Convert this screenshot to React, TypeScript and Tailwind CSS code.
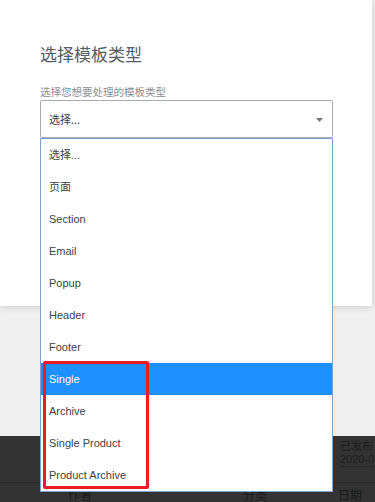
const options = ["选择...", "页面", "Section", "Email", "Popup", "Header", "Footer", "Single", "Archive", "Single Product", "Product Archive"];

const font = "font-['Liberation_Sans','Noto_Sans_CJK_SC',sans-serif]";

export default function App() {
  return (
    <div className={`relative h-[502px] w-[375px] overflow-hidden bg-[#f0f0f1] ${font}`}>
      {/* modal */}
      <div className="flex h-[306px] w-[375px]">
        <div className="relative z-10 h-[306px] w-[372px] bg-white px-10 pt-[44px] shadow-[0_2px_6px_rgba(0,0,0,0.12)]">
          <h2 className="text-[17px] leading-[20px] text-[#555d66] font-['Noto_Sans_CJK_SC',sans-serif]">选择模板类型</h2>
          <label className="mt-[21px] block text-[10.5px] leading-[14px] text-[#8a8e93] font-['Noto_Sans_CJK_SC',sans-serif]">
            选择您想要处理的模板类型
          </label>
          <div className="mt-[1px] flex h-[38px] w-[293px] items-center justify-between rounded-[2px] border border-[#a7abb0] pl-[8px] pr-[9px]">
            <span className="text-[11px] text-[#3c434a] font-['Noto_Sans_CJK_SC',sans-serif]">选择...</span>
            <svg width="7" height="4" viewBox="0 0 7 4" className="mt-[1px]">
              <path d="M0 0h7L3.5 4z" fill="#72777c" />
            </svg>
          </div>
        </div>
        <div className="w-[3px] bg-[#ebebec]" />
      </div>

      {/* page behind */}
      <div className="h-[130px]" />
      <div className="h-[46px] whitespace-nowrap bg-[#333333] pl-[340px] pt-[3px] text-[11px] leading-[13px] text-[#1e1e1e] font-['Noto_Sans_CJK_SC',sans-serif]">
        <div>已发布</div>
        <div className="inline-block border-b border-dotted border-[#1e1e1e] font-['Liberation_Sans',sans-serif]">2020-04-12</div>
      </div>
      <div className="h-px bg-[#2a2a2a]" />
      <div className="flex h-[20px] items-end bg-[#333333] text-[12px] leading-[16px] text-[#1a1a1a] font-['Noto_Sans_CJK_SC',sans-serif]">
        <span className="ml-[68px]">作者</span>
        <span className="ml-[151px]">分类</span>
        <span className="ml-[71px]">日期</span>
      </div>

      {/* open dropdown list */}
      <ul className="absolute left-[40px] top-[138px] z-20 w-[293px] border border-[#7a9fd9] bg-white">
        {options.map((o) => (
          <li
            key={o}
            className={`flex h-[32px] items-center pl-[8px] text-[11px] ${
              o === "Single" ? "bg-[#1e90ff] text-white" : "text-[#3c434a]"
            }`}
          >
            {o}
          </li>
        ))}
      </ul>

      {/* annotation */}
      <div className="absolute left-[43px] top-[361px] z-30 h-[128px] w-[106px] rounded-[2px] border-[3px] border-[#ec1c24]" />
    </div>
  );
}
